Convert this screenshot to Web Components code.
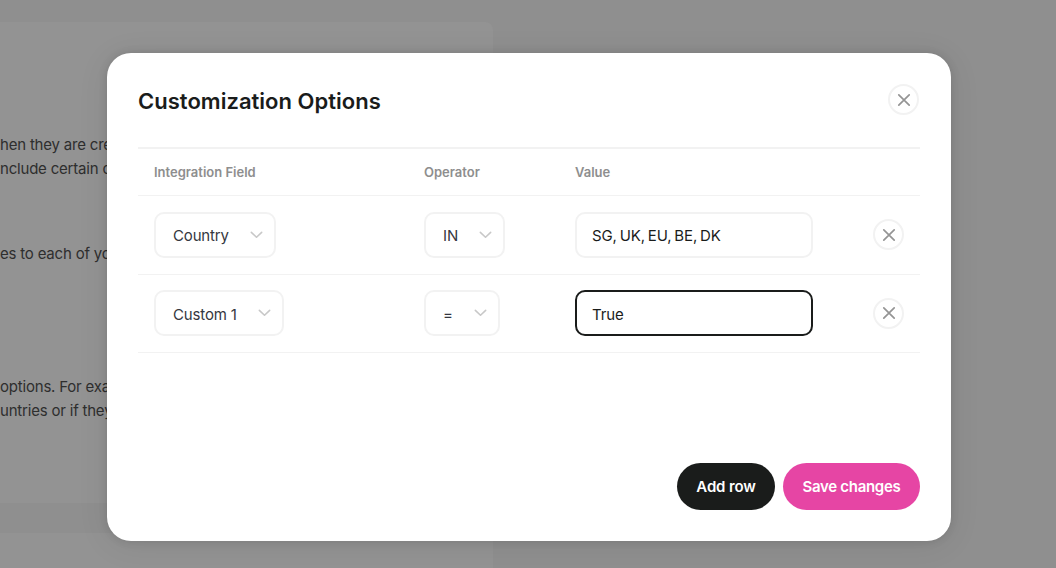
<!DOCTYPE html>
<html lang="en"><head><meta charset="utf-8"><title>Customization Options</title>
<style>
html,body{margin:0;padding:0;height:100%;overflow:hidden;background:#8f8f8f}
body{font-family:Inter,"Liberation Sans",sans-serif}
</style></head>
<body>
<bg-page>
  <bg-panel>
    <bg-line style="--top:111px">hen they are cre</bg-line>
    <bg-line>nclude certain c</bg-line>
    <bg-line style="--top:61px">es to each of yo</bg-line>
    <bg-line style="--top:109px">options. For exa</bg-line>
    <bg-line>untries or if they</bg-line>
  </bg-panel>
  <bg-panel class="second"></bg-panel>
</bg-page>
<modal-dialog heading="Customization Options">
  <options-table>
    <filter-row>
      <select-box slot="field" label="Country" style="width:122px"></select-box>
      <select-box slot="op" label="IN" style="width:81px"></select-box>
      <value-box slot="value" value="SG, UK, EU, BE, DK"></value-box>
    </filter-row>
    <filter-row>
      <select-box slot="field" label="Custom 1" style="width:130px"></select-box>
      <select-box slot="op" label="=" style="width:76px"></select-box>
      <value-box slot="value" value="True" focused></value-box>
    </filter-row>
  </options-table>
  <pill-button slot="actions" style="--bg:#1a1c1b;--ls:-.15px;width:98px">Add row</pill-button>
  <pill-button slot="actions" style="--bg:#e645a4;--ls:-.3px;width:137px">Save changes</pill-button>
</modal-dialog>
<script>
const X='<svg viewBox="0 0 16 16" width="16" height="16" fill="none" stroke="currentColor" stroke-width="1.7" stroke-linecap="round"><path d="M2.8 2.8l10.4 10.4M13.2 2.8L2.8 13.2"/></svg>';
function def(name,html,init){
  customElements.define(name,class extends HTMLElement{
    constructor(){super();this.attachShadow({mode:'open'}).innerHTML=html;}
    connectedCallback(){init&&init.call(this,this.shadowRoot);}
  });
}
def('bg-page',`<style>:host{display:flex;flex-direction:column;gap:30px;padding-top:22px;height:568px;box-sizing:border-box;overflow:hidden}</style><slot></slot>`);
def('bg-panel',`<style>:host{display:block;flex:none;width:493px;height:481px;box-sizing:border-box;background:#939393;border-radius:0 8px 8px 0}
:host(.second){height:60px;border-radius:0 8px 0 0}</style><slot></slot>`);
def('bg-line',`<style>:host{display:block;white-space:nowrap;font-size:15px;line-height:24px;color:#2e2e2e;margin-top:var(--top,0);overflow:hidden;letter-spacing:-.2px}</style><slot></slot>`);
def('modal-dialog',`<style>
:host{position:absolute;left:107px;top:53px;width:844px;height:488px;box-sizing:border-box;background:#fff;border-radius:24px;padding:0 31px 31px;display:flex;flex-direction:column;box-shadow:0 0 10px rgba(0,0,0,.12),0 4px 32px rgba(0,0,0,.08);color:#1a1c1b}
header{display:flex;align-items:flex-start;justify-content:space-between;height:94px;flex:none;border-bottom:2px solid #f2f2f2}
h2{margin:31px 0 0;font-size:22px;line-height:34px;font-weight:600;letter-spacing:.02px;color:#1a1c1b}
.main{flex:1}
footer{display:flex;justify-content:flex-end;gap:8px}
icon-button{margin:31px 1px 0 0}
</style><header><h2></h2><icon-button></icon-button></header><div class="main"><slot></slot></div><footer><slot name="actions"></slot></footer>`,function(r){r.querySelector('h2').textContent=this.getAttribute('heading');});
def('options-table',`<style>:host{display:block}
.head{display:grid;grid-template-columns:270px 151px 1fr;height:46px;align-items:center;border-bottom:1px solid #f2f2f2;font-size:13px;font-weight:600;color:#8e8e8e;padding-left:16px}
</style><div class="head"><span>Integration Field</span><span>Operator</span><span>Value</span></div><slot></slot>`);
def('filter-row',`<style>:host{display:grid;grid-template-columns:270px 151px 238px 1fr;height:77.5px;align-items:center;border-bottom:1px solid #f2f2f2;padding-left:16px}
.x{justify-self:end;margin-right:16px;margin-top:0}</style><slot name="field"></slot><slot name="op"></slot><slot name="value"></slot><icon-button class="x"></icon-button>`);
def('select-box',`<style>:host{display:flex;align-items:center;justify-content:space-between;box-sizing:border-box;height:46px;border:2px solid #f2f2f2;border-radius:10px;padding:0 11px 0 17px;font-size:15px;letter-spacing:-.15px;color:#353740;background:#fff}
span{padding-top:2px}
svg{flex:none;color:#c8c8c8}</style><span></span><svg viewBox="0 0 14 9" width="13" height="8" fill="none" stroke="currentColor" stroke-width="1.8" stroke-linecap="round" stroke-linejoin="round"><path d="M1.2 1.5L7 7l5.8-5.5"/></svg>`,function(r){r.querySelector('span').textContent=this.getAttribute('label');});
def('value-box',`<style>:host{display:flex;align-items:center;box-sizing:border-box;height:46px;width:238px;border:2px solid #f2f2f2;border-radius:10px;padding:0 15px;font-size:15px;letter-spacing:-.1px;word-spacing:-1.3px;color:#1a1c1b;background:#fff}
span{padding-top:2px}
:host([focused]){border-color:#1a1c1b}</style><span></span>`,function(r){r.querySelector('span').textContent=this.getAttribute('value');});
def('icon-button',`<style>:host{display:flex;align-items:center;justify-content:center;box-sizing:border-box;width:31px;height:31px;border:2px solid #f2f2f2;border-radius:50%;color:#949494;background:#fff;flex:none}
svg{display:block}</style>${X}`);
def('pill-button',`<style>:host{display:flex;align-items:center;justify-content:center;box-sizing:border-box;height:47px;border-radius:24px;background:var(--bg);color:#fff;font-size:15px;font-weight:600;letter-spacing:var(--ls)}</style><slot></slot>`);
</script>
</body></html>
